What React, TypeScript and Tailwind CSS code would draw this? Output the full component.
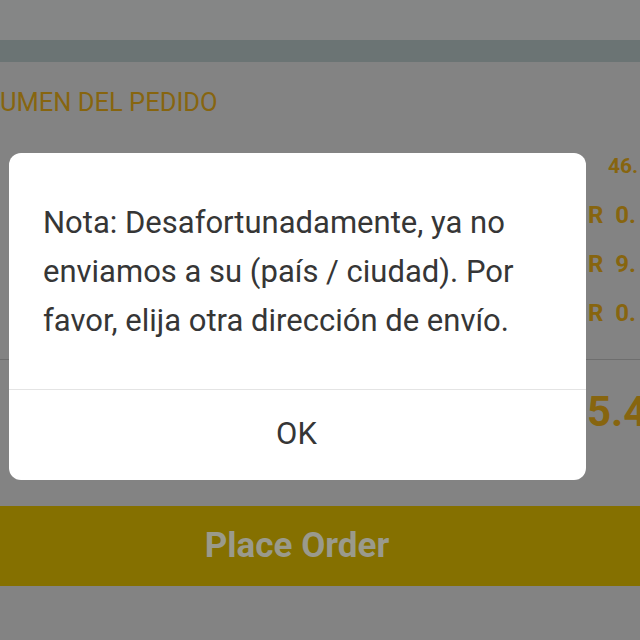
import React from "react";

export default function App() {
  return (
    <div className="relative w-[640px] h-[640px] overflow-hidden bg-[#838383] font-['Roboto',sans-serif]">
      <div className="h-[40px] bg-[#858686]" />
      <div className="h-[22px] bg-[#6b7474]" />
      <div className="flex flex-col">
        <p className="pt-[25px] text-[25.5px] font-normal leading-[30px] text-[#87650f] whitespace-nowrap">
          UMEN DEL PEDIDO
        </p>
        <div className="mt-[25px] flex flex-col items-start pl-[588px] text-[24px] font-bold text-[#87650f] leading-[49px] whitespace-nowrap">
          <span className="pl-[20px] text-[21px]">46.</span>
          <span>R&nbsp;&nbsp;0.</span>
          <span>R&nbsp;&nbsp;9.</span>
          <span>R&nbsp;&nbsp;0.</span>
        </div>
        <div className="mt-[21px] h-px bg-[#6e6e6e]" />
        <div className="h-[146px] pl-[587px] pt-[30px] text-[42px] font-bold leading-[44px] text-[#87650f] whitespace-nowrap">
          5.4
        </div>
        <div className="h-[80px] bg-[#857000] flex items-center justify-center">
          <span className="text-[35px] font-bold text-[#9a9a8c] pr-[46px]">Place Order</span>
        </div>
      </div>

      <div className="absolute left-[9px] top-[153px] w-[577px] h-[327px] rounded-[12px] bg-white flex flex-col">
        <div className="h-[236px] pl-[34px] pr-[10px] pt-[45px] text-[31px] leading-[49px] text-[#363636] whitespace-nowrap">
          Nota: Desafortunadamente, ya no
          <br />
          enviamos a su (país / ciudad). Por
          <br />
          favor, elija otra dirección de envío.
        </div>
        <div className="h-px bg-[#e4e4e4]" />
        <div className="flex-1 flex items-center justify-center text-[31px] text-[#363636] pb-[2px] pr-[2px]">
          OK
        </div>
      </div>
    </div>
  );
}
